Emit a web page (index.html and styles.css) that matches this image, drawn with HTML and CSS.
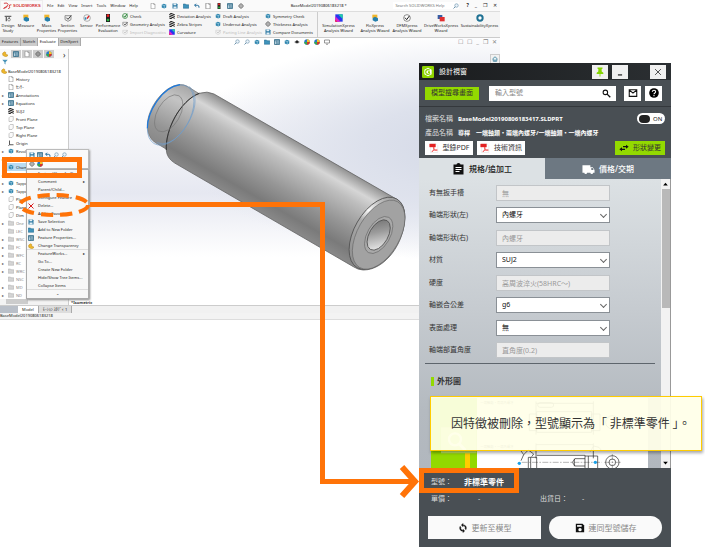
FILE: index.html
```html
<!DOCTYPE html>
<html lang="zh-Hant">
<head>
<meta charset="utf-8">
<title>設計視窗</title>
<link rel="stylesheet" href="styles.css">
</head>
<body>
<svg class="defs" aria-hidden="true">
  <defs>
    <symbol id="i-lens" viewBox="0 0 24 24"><circle cx="14" cy="10" r="7" fill="#eaf3fa" stroke="#6e93ac" stroke-width="2.5"/><path d="M9 15l-7 7" stroke="#6e93ac" stroke-width="4"/></symbol>
    <symbol id="i-doc" viewBox="0 0 24 24"><path d="M4 1h11l5 5v17H4z" fill="#fff" stroke="#777" stroke-width="2"/><path d="M15 1v5h5" fill="none" stroke="#777" stroke-width="2"/></symbol>
    <symbol id="i-plane" viewBox="0 0 24 24"><path d="M4 7l5-5h12v14l-5 6H4z" fill="#fafafa" stroke="#999" stroke-width="2"/></symbol>
    <symbol id="i-folder" viewBox="0 0 24 24"><path d="M1 4h9l2 3h11v14H1z" fill="#d4d4d4" stroke="#aaa" stroke-width="2"/></symbol>
    <symbol id="i-bluefolder" viewBox="0 0 24 24"><path d="M1 4h9l2 3h11v14H1z" fill="#3f93bb" stroke="#1d658a" stroke-width="2"/></symbol>
    <symbol id="i-cube" viewBox="0 0 24 24"><path d="M3 7l8-4 10 3v12l-8 4-10-4z" fill="#2d84ad"/><path d="M3 7l10 3v12M13 10l8-4" fill="none" stroke="#d6edf7" stroke-width="2"/></symbol>
    <symbol id="i-part" viewBox="0 0 24 24"><path d="M3 8l8-5 4 3v8l7 1v5l-8 3L3 17z" fill="#f0b92b" stroke="#b78010" stroke-width="2"/></symbol>
    <symbol id="i-list" viewBox="0 0 24 24"><path d="M2 2h20v20H2z" fill="#d6eaf5" stroke="#27617f" stroke-width="3"/><path d="M2 7h20M9 7v15M12 12h8M12 17h8" stroke="#27617f" stroke-width="3"/></symbol>
    <symbol id="i-ball" viewBox="0 0 24 24"><circle cx="12" cy="12" r="11" fill="#2678ca"/><path d="M12 12V1a11 11 0 0 1 11 11z" fill="#f6c429"/><path d="M12 12h11a11 11 0 0 1-11 11z" fill="#dc3428"/><path d="M12 12v11A11 11 0 0 1 1 12z" fill="#39a74c"/></symbol>
    <symbol id="i-target" viewBox="0 0 24 24"><circle cx="12" cy="12" r="8" fill="none" stroke="#555" stroke-width="2.5"/><path d="M12 0v24M0 12h24" stroke="#555" stroke-width="2"/></symbol>
    <symbol id="i-eye" viewBox="0 0 24 24"><path d="M1 12q11-13 22 0q-11 12-22 0" fill="#777"/><circle cx="12" cy="11" r="5" fill="#222"/></symbol>
    <symbol id="i-check" viewBox="0 0 24 24"><circle cx="12" cy="12" r="10" fill="#eaf5ea" stroke="#3b8c46" stroke-width="3"/><path d="M6 11l5 6 10-14" fill="none" stroke="#227a32" stroke-width="4"/></symbol>
    <symbol id="i-geo" viewBox="0 0 24 24"><path d="M3 5h18v12l-9 5-9-5z" fill="#eee" stroke="#666" stroke-width="2"/><path d="M7 11l5 5L22 4" fill="none" stroke="#444" stroke-width="3"/></symbol>
    <symbol id="i-zebra" viewBox="0 0 24 24"><path d="M1 1h22v22H1z" fill="#fff"/><path d="M1 6l22 8M1 13l22 8M3 0l20 7M1 20l12 4" stroke="#111" stroke-width="4"/></symbol>
    <symbol id="i-curv" viewBox="0 0 24 24"><path d="M1 1h22v22H1z" fill="#2638ee"/><path d="M1 7v16h16z" fill="#e421c9"/><path d="M9 1h14v14z" fill="#22cfa8"/><path d="M1 17v6h6z" fill="#f22"/></symbol>
    <symbol id="i-gauge" viewBox="0 0 24 24"><circle cx="12" cy="12" r="10" fill="#f7f7f7" stroke="#8c8c8c" stroke-width="2"/><path d="M12 14l6-8" stroke="#d22" stroke-width="4"/><path d="M5 10h5v7H5z" fill="#3287b3"/></symbol>
    <symbol id="i-light" viewBox="0 0 24 24"><path d="M6 0h12v24H6z" fill="#222"/><circle cx="12" cy="5" r="4" fill="#e22"/><circle cx="12" cy="18" r="4" fill="#26b33e"/></symbol>
    <symbol id="i-caliper" viewBox="0 0 24 24"><path d="M2 5h20v4H2zM5 9h4v13H5zM14 9h3v6h-3z" fill="#666"/><circle cx="15" cy="17" r="4" fill="none" stroke="#666" stroke-width="2"/></symbol>
    <symbol id="i-mass" viewBox="0 0 24 24"><path d="M4 2h15v10H4z" fill="#f0b52a"/><path d="M12 8l9 5v7l-8 3-8-4v-7z" fill="#267fac"/></symbol>
    <symbol id="i-save" viewBox="0 0 24 24"><path d="M2 2h17l3 3v17H2z" fill="#2d79a2"/><path d="M6 2h11v7H6zM6 14h12v8H6z" fill="#e4eff5"/></symbol>
    <symbol id="i-undo" viewBox="0 0 24 24"><path d="M8 3L2 9l7 6M3 9h10q9 0 7 10" fill="none" stroke="#266f9e" stroke-width="4"/></symbol>
    <symbol id="i-red" viewBox="0 0 24 24"><path d="M2 3h14v12H2z" fill="#375da4"/><path d="M8 9h15v13H8z" fill="#e12f2f"/></symbol>
    <symbol id="i-pdf" viewBox="0 0 24 24"><path d="M4 1h12l5 5v17H4z" fill="#fff" stroke="#d5d5d5"/><path d="M1 2h15v8H1z" fill="#e32222"/><path d="M7 21c4-4 6-8 5-11-2-1-2 3 1 6 2 2 5 3 7 1-1-2-8-1-13 4z" fill="none" stroke="#e33" stroke-width="1.7"/></symbol>
  </defs>
</svg>

<main class="stage">
  <section class="cad">
    <header class="titlebar">
      <div class="brand"><svg class="ds" viewBox="0 0 30 24"><path d="M3 3q13-4 14 4-2 6-15 13 8-2 13-7M28 8q-9-1-7 5 5 6-4 8" fill="none" stroke="#d32f33" stroke-width="3"/></svg><span>SOLIDWORKS</span></div>
      <nav class="menus"><a href="#">File</a><a href="#">Edit</a><a href="#">View</a><a href="#">Insert</a><a href="#">Tools</a><a href="#">Window</a><a href="#">Help</a></nav>
      <div class="quick">
        <svg><use href="#i-doc"/></svg><svg><use href="#i-cube"/></svg><svg><use href="#i-save"/></svg><svg><use href="#i-bluefolder"/></svg><svg><use href="#i-undo"/></svg><svg class="pressed"><use href="#i-doc"/></svg><svg><use href="#i-light"/></svg><svg><use href="#i-list"/></svg><svg><use href="#i-target"/></svg>
      </div>
      <p class="doc">BaseModel20190806183218 *</p>
      <label class="help"><input type="text" aria-label="Search SOLIDWORKS Help" placeholder="Search SOLIDWORKS Help"><svg><use href="#i-lens"/></svg></label>
      <div class="winbtns"><b>?</b><span>_</span><span>❐</span><span>✕</span></div>
    </header>

    <div class="ribbon">
      <button class="tool"><svg><use href="#i-caliper"/></svg>Design<br>Study</button>
      <button class="tool"><svg><use href="#i-mass"/></svg>Measure</button>
      <button class="tool"><svg><use href="#i-mass"/></svg>Mass<br>Properties</button>
      <button class="tool"><svg><use href="#i-geo"/></svg>Section<br>Properties</button>
      <button class="tool"><svg><use href="#i-gauge"/></svg>Sensor</button>
      <button class="tool"><svg><use href="#i-light"/></svg>Performance<br>Evaluation</button>
      <div class="stack">
        <button><svg><use href="#i-check"/></svg>Check</button>
        <button><svg><use href="#i-geo"/></svg>Geometry Analysis</button>
        <button disabled><svg><use href="#i-geo"/></svg>Import Diagnostics</button>
      </div>
      <div class="stack">
        <button><svg><use href="#i-zebra"/></svg>Deviation Analysis</button>
        <button><svg><use href="#i-zebra"/></svg>Zebra Stripes</button>
        <button><svg><use href="#i-curv"/></svg>Curvature</button>
      </div>
      <div class="stack">
        <button><svg><use href="#i-cube"/></svg>Draft Analysis</button>
        <button><svg><use href="#i-cube"/></svg>Undercut Analysis</button>
        <button disabled><svg><use href="#i-geo"/></svg>Parting Line Analysis</button>
      </div>
      <div class="stack">
        <button><svg><use href="#i-cube"/></svg>Symmetry Check</button>
        <button><svg><use href="#i-target"/></svg>Thickness Analysis</button>
        <button><svg><use href="#i-save"/></svg>Compare Documents</button>
      </div>
      <button class="tool first-x"><svg><use href="#i-curv"/></svg>SimulationXpress<br>Analysis Wizard</button>
      <button class="tool"><svg><use href="#i-mass"/></svg>FloXpress<br>Analysis Wizard</button>
      <button class="tool"><svg viewBox="0 0 24 24"><circle cx="12" cy="12" r="10" fill="#fff" stroke="#555" stroke-width="2"/><path d="M6 11l5 6 8-11" fill="none" stroke="#222" stroke-width="3"/></svg>DFMXpress<br>Analysis Wizard</button>
      <button class="tool"><svg><use href="#i-red"/></svg>DriveWorksXpress<br>Wizard</button>
      <button class="tool"><svg viewBox="0 0 24 24"><circle cx="12" cy="12" r="8" fill="#fff" stroke="#1f7193" stroke-width="6"/></svg>SustainabilityXpress</button>
    </div>

    <div class="work">
      <aside class="side">
        <nav class="tabs"><a href="#">Features</a><a href="#">Sketch</a><a href="#" class="on">Evaluate</a><a href="#">DimXpert</a></nav>
        <div class="tree">
          <div class="treetabs"><svg><use href="#i-part"/></svg><svg><use href="#i-list"/></svg><svg><use href="#i-doc"/></svg><svg><use href="#i-target"/></svg><svg><use href="#i-ball"/></svg><span>›</span></div>
          <div class="filter"><svg viewBox="0 0 24 24"><path d="M1 3h22l-9 10v9l-4-3v-6z" fill="#4b95b8"/></svg></div>
          <ul>
            <li class="root"><svg><use href="#i-part"/></svg>BaseModel20190806183218</li>
            <li><svg><use href="#i-doc"/></svg>History</li>
            <li><svg><use href="#i-doc"/></svg>ｾﾝｻｰ</li>
            <li class="more"><svg><use href="#i-list"/></svg>Annotations</li>
            <li class="more"><svg><use href="#i-list"/></svg>Equations</li>
            <li><svg><use href="#i-zebra"/></svg>SUJ2</li>
            <li><svg><use href="#i-plane"/></svg>Front Plane</li>
            <li><svg><use href="#i-plane"/></svg>Top Plane</li>
            <li><svg><use href="#i-plane"/></svg>Right Plane</li>
            <li><svg viewBox="0 0 24 24"><path d="M6 2v17h16M6 19l-4 4" fill="none" stroke="#222" stroke-width="3"/></svg>Origin</li>
            <li class="more"><svg><use href="#i-cube"/></svg>Revolve1</li>
            <li class="more"><svg><use href="#i-cube"/></svg>Chamfer1</li>
            <li class="sel"><svg><use href="#i-cube"/></svg>Chamfer2</li>
            <li class="more"><svg><use href="#i-cube"/></svg>Chamfer3</li>
            <li class="more"><svg><use href="#i-cube"/></svg>Tapped1</li>
            <li class="more"><svg><use href="#i-cube"/></svg>Tapped2</li>
            <li><svg><use href="#i-plane"/></svg>Plane1</li>
            <li><svg><use href="#i-plane"/></svg>Plane2</li>
            <li><svg><use href="#i-plane"/></svg>Dim</li>
            <li class="more dim"><svg><use href="#i-folder"/></svg>One</li>
            <li class="dim"><svg><use href="#i-folder"/></svg>LEC</li>
            <li class="more dim"><svg><use href="#i-folder"/></svg>WSC</li>
            <li class="more dim"><svg><use href="#i-folder"/></svg>FC</li>
            <li class="more dim"><svg><use href="#i-folder"/></svg>WFC</li>
            <li class="more dim"><svg><use href="#i-folder"/></svg>RC</li>
            <li class="more dim"><svg><use href="#i-folder"/></svg>WRC</li>
            <li class="dim"><svg><use href="#i-folder"/></svg>NSC</li>
            <li class="more dim"><svg><use href="#i-folder"/></svg>MD</li>
            <li class="more dim"><svg><use href="#i-folder"/></svg>ND</li>
          </ul>
          <div class="hscroll"><span></span></div>
        </div>
      </aside>

      <div class="view">
        <div class="viewbar">
          <div class="hud"><svg><use href="#i-lens"/></svg><svg><use href="#i-lens"/></svg><svg><use href="#i-cube"/></svg><svg><use href="#i-bluefolder"/></svg><svg><use href="#i-list"/></svg><svg><use href="#i-cube"/></svg><svg><use href="#i-eye"/></svg><svg><use href="#i-ball"/></svg><svg><use href="#i-ball"/></svg><svg viewBox="0 0 24 24"><path d="M2 4h20v12H2zM8 21h8" fill="#fff" stroke="#777" stroke-width="3"/></svg></div>
          <div class="viewwin"><span>☐</span><span>☐</span><span>_</span><span>❐</span><span>✕</span></div>
        </div>
        <div class="dock"><svg viewBox="0 0 24 24"><path d="M2 12L12 3l10 9M5 11v10h14V11" fill="#e6f2f7" stroke="#2f7894" stroke-width="3"/><path d="M10 14h4v7h-4z" fill="#2f7894"/></svg></div>
        <svg class="model" viewBox="0 0 870 645" role="img" aria-label="Shaft model">
          <defs>
            <linearGradient id="g-body" gradientUnits="userSpaceOnUse" x1="500" y1="214" x2="381" y2="423"><stop offset="0" stop-color="#8f8f8f"/><stop offset=".06" stop-color="#a9a9a9"/><stop offset=".17" stop-color="#d6d6d6"/><stop offset=".3" stop-color="#bebebe"/><stop offset=".6" stop-color="#969696"/><stop offset=".85" stop-color="#7a7a7a"/><stop offset="1" stop-color="#898989"/></linearGradient>
            <linearGradient id="g-stub" x1=".7" y1="0" x2=".3" y2="1"><stop offset="0" stop-color="#a5a5a5"/><stop offset=".25" stop-color="#c4c4c4"/><stop offset=".7" stop-color="#959595"/><stop offset="1" stop-color="#858585"/></linearGradient>
            <linearGradient id="g-hole" x1="0" y1="0" x2=".5" y2="1"><stop offset="0" stop-color="#6d6d6d"/><stop offset=".5" stop-color="#9b9b9b"/><stop offset="1" stop-color="#dedede"/></linearGradient>
            <linearGradient id="g-rim" x1="0" y1="0" x2="0" y2="1"><stop offset="0" stop-color="#999"/><stop offset=".15" stop-color="#c2c2c2"/><stop offset=".3" stop-color="#fafafa"/><stop offset=".45" stop-color="#aaa"/><stop offset="1" stop-color="#8d8d8d"/></linearGradient>
          </defs>
          <path d="M52 165C53 115 100 48 148 44q14-1 24 5l45 28L118 243 73 216Q52 200 52 165Z" fill="url(#g-stub)" stroke="#666" stroke-width="2"/>
          <path d="M109 240C105 180 150 92 208 70Q232 62 252 72L790 382C815 395 824 412 824 440 824 520 765 600 700 600Q685 600 670 590L134 279Q110 264 109 240Z" fill="url(#g-body)" stroke="#666" stroke-width="2.5"/>
          <path d="M109 240C105 180 150 92 208 70" fill="none" stroke="#333" stroke-width="3"/>
          <g fill="none" stroke="#6e9ccb" stroke-width="1.8"><ellipse cx="122" cy="135" rx="57" ry="99" transform="rotate(30 122 135)"/><path d="M178 49C212 80 192 145 150 193Q115 231 80 218"/></g>
          <path d="M52 175C52 128 93 52 150 44" fill="none" stroke="#1b78dc" stroke-width="3.5"/>
          <ellipse cx="116" cy="130" rx="34" ry="61" transform="rotate(30 116 130)" fill="none" stroke="#777" stroke-width="1.8"/>
          <ellipse cx="741" cy="490" rx="68" ry="119" transform="rotate(30 741 490)" fill="url(#g-rim)" stroke="#555" stroke-width="2.5"/>
          <ellipse cx="746" cy="494" rx="63" ry="114" transform="rotate(30 746 494)" fill="#a2a2a2" stroke="#666" stroke-width="1.8"/>
          <ellipse cx="746" cy="495" rx="34" ry="61" transform="rotate(30 746 495)" fill="#a9a9a9" stroke="#666" stroke-width="1.8"/>
          <ellipse cx="746" cy="495" rx="28" ry="50" transform="rotate(30 746 495)" fill="url(#g-hole)" stroke="#555" stroke-width="2.5"/>
        </svg>
        <p class="iso">*Isometric</p>
      </div>
    </div>

    <div class="sheets"><i></i><a href="#" class="on">Model</a><a href="#">ﾓｰｼｮﾝ ｽﾀﾃﾞｨ 1</a></div>
    <footer class="status">BaseModel20190806183218</footer>
  </section>

  <div class="context">
    <div class="minibar"><svg><use href="#i-save"/></svg><svg><use href="#i-list"/></svg><svg><use href="#i-undo"/></svg><svg><use href="#i-lens"/></svg><svg><use href="#i-lens"/></svg><svg><use href="#i-target"/></svg><svg><use href="#i-ball"/></svg></div>
    <ul class="menu">
      <li class="head">Feature(Chamfer2)</li>
      <li class="sub">Comment</li>
      <li>Parent/Child...</li>
      <li>Configure Feature</li>
      <li><svg viewBox="0 0 24 24"><path d="M2 2l20 20M22 2L2 22" stroke="#d91c1c" stroke-width="4"/></svg>Delete...</li>
      <li>Add to Favorites</li>
      <li><svg><use href="#i-save"/></svg>Save Selection</li>
      <li><svg><use href="#i-bluefolder"/></svg>Add to New Folder</li>
      <li><svg><use href="#i-list"/></svg>Feature Properties...</li>
      <li class="line"><svg><use href="#i-part"/></svg>Change Transparency</li>
      <li class="sub">FeatureWorks...</li>
      <li>Go To...</li>
      <li>Create New Folder</li>
      <li>Hide/Show Tree Items...</li>
      <li class="line">Collapse Items</li>
      <li class="end">⌄</li>
    </ul>
  </div>

  <section class="panel">
    <header class="p-title">
      <svg class="logo" viewBox="0 0 36 36"><rect width="36" height="36" rx="4" fill="#8fd400"/><path d="M18 5l11 6v14l-11 6-11-6V11z" fill="#fff"/><path d="M23 13a7 7 0 1 0 1 9" fill="none" stroke="#8fd400" stroke-width="4"/><path d="M18 16h6v5h-6z" fill="#8fd400"/></svg>
      <h1>設計視窗</h1>
      <button aria-label="釘選"><svg viewBox="0 0 24 24"><path d="M6 1h12v3l-2 1v6l4 3v3h-7v6h-2v-6H4v-3l4-3V5L6 4z" fill="#84d400"/></svg></button>
      <button aria-label="最小化"><svg viewBox="0 0 24 24"><path d="M7 19h10" stroke="#222" stroke-width="3"/></svg></button>
      <button class="close" aria-label="關閉"><svg viewBox="0 0 24 24"><path d="M5 5l14 14M19 5L5 19" stroke="#333" stroke-width="2"/></svg></button>
    </header>
    <div class="p-search">
      <button class="green">模型搜尋畫面</button>
      <label class="query"><input type="text" aria-label="型號" placeholder="輸入型號"><svg viewBox="0 0 24 24"><circle cx="9" cy="9" r="6" fill="none" stroke="#111" stroke-width="2.8"/><path d="M13 13l9 9" stroke="#111" stroke-width="3.6"/></svg></label>
      <button class="sq" aria-label="郵件"><svg viewBox="0 0 24 24"><path d="M3 4h18v16H3zM3 5l9 7 9-7" fill="none" stroke="#111" stroke-width="2.6"/></svg></button>
      <button class="sq" aria-label="說明"><svg viewBox="0 0 24 24"><circle cx="12" cy="12" r="11.500" fill="#000"/><path d="M8 9c0-5 8-5 8 0 0 3-4 3-4 6M12 17v3" fill="none" stroke="#fff" stroke-width="2.6"/></svg></button>
    </div>
    <div class="p-info">
      <dl>
        <dt>檔案名稱</dt><dd>BaseModel20190806183417.SLDPRT</dd>
        <dt>產品名稱</dt><dd>導桿　一端軸類・兩端內螺牙/一端軸類・一端內螺牙</dd>
      </dl>
      <label class="switch"><input type="checkbox" checked><i></i>ON</label>
      <div class="actions">
        <button><svg><use href="#i-pdf"/></svg>型錄PDF</button>
        <button><svg><use href="#i-pdf"/></svg>技術資訊</button>
        <button class="green"><svg class="wide" viewBox="0 0 30 24"><path d="M1 16l8-6v4h9v4H9v4zM29 8l-8-6v4h-9v4h9v4z" fill="#111"/></svg>形狀變更</button>
      </div>
    </div>
    <nav class="p-tabs">
      <a href="#" class="on"><svg viewBox="0 0 24 24"><path d="M2 3h6a4 3 0 0 1 8 0h6v20H2z" fill="#111"/><path d="M6 9h12M6 13h12M6 17h8" stroke="#fff" stroke-width="2"/></svg>規格/追加工</a>
      <a href="#"><svg viewBox="0 0 28 24"><path d="M1 4h17v4h5l4 6v6h-3a3 3 0 0 1-6 0h-7a3 3 0 0 1-6 0H1z" fill="#fff"/><path d="M20 10h3l2 4h-5z" fill="#6d7882"/></svg>價格/交期</a>
    </nav>
    <div class="p-body">
      <div class="content">
        <form class="fields">
          <label for="f1">有無扳手槽</label><input id="f1" value="無" disabled>
          <label for="f2">軸端形狀(左)</label><span class="pick"><select id="f2"><option>內螺牙</option></select></span>
          <label for="f3">軸端形狀(右)</label><input id="f3" value="內螺牙" disabled>
          <label for="f4">材質</label><span class="pick"><select id="f4"><option>SUJ2</option></select></span>
          <label for="f5">硬度</label><input id="f5" value="高周波淬火(58HRC～)" disabled>
          <label for="f6">軸嵌合公差</label><span class="pick"><select id="f6"><option>g6</option></select></span>
          <label for="f7">表面處理</label><span class="pick"><select id="f7"><option>無</option></select></span>
          <label for="f8">軸端部直角度</label><input id="f8" value="直角度(0.2)" disabled>
        </form>
        <h2>外形圖</h2>
        <svg class="outline" viewBox="48 102 651 210" role="img" aria-label="外形圖">
          <path d="M48 102h651v210H48z" fill="#fff"/>
          <path d="M48 102h138v210H48z" fill="#93d900"/><path d="M150 190h15v122h-15z" fill="#fc0"/>
          <path d="M78 190h107v78H78z" fill="#bfe765"/><circle cx="120" cy="226" r="18" fill="none" stroke="#fff" stroke-width="7"/><path d="M133 240l18 19" stroke="#fff" stroke-width="9"/>
          <g font-family="Noto Sans CJK TC, sans-serif" font-size="10" fill="#333"><text x="196" y="121">一端軸類・兩端內螺牙</text><text x="196" y="252">一端軸類・一端內螺牙</text></g>
          <g fill="none" stroke="#222" stroke-width="2">
            <path d="M363 118h172M363 112v100M535 112v100M343 150h22v50h-22zM365 143h165v62H365zM530 150h25v50h-25zM363 242h172M363 238v45M535 238v45"/>
            <path d="M340 280h25v32M340 280v32M347 280v32M365 274h145v38M510 276h38v36M520 276v36M510 284l-30 0-8 11 8 11h30M478 284v23"/>
            <path d="M320 295h240M568 295h50M592 270v42" stroke-width="1" stroke-dasharray="18 4 5 4"/>
            <path d="M318 290l8-18 14-14 16 12-6 8M326 272l-10-14M526 262l10-16 16 4 8 10"/><circle cx="592" cy="295" r="20"/><circle cx="592" cy="295" r="10"/><circle cx="592" cy="175" r="20"/>
            <rect x="368" y="116" width="48" height="14" rx="7"/>
          </g>
          <circle cx="313" cy="298" r="5" fill="#19a0e8"/><circle cx="541" cy="295" r="5" fill="#19a0e8"/>
        </svg>
      </div>
      <div class="scroll"><svg viewBox="0 0 24 24"><path d="M4 17l8-9 8 9z"/></svg><i></i><svg viewBox="0 0 24 24"><path d="M4 8l8 9 8-9z"/></svg></div>
    </div>
    <footer class="p-foot">
      <div class="facts model-no"><span>型號：</span><strong>非標準零件</strong></div>
      <div class="facts"><span>單價：</span><em>-</em><span>出貨日：</span><em>-</em></div>
      <div class="buttons">
        <button><svg viewBox="0 0 24 24"><path d="M12 1v3a8 8 0 0 1 7 12l-2-2a6 6 0 0 0-5-8v3L8 5zM12 23v-3A8 8 0 0 1 5 8l2 2a6 6 0 0 0 5 8v-3l4 4z" fill="#111" stroke="#111"/></svg>更新至模型</button>
        <button class="round"><svg viewBox="0 0 24 24"><path d="M2 2h16l4 4v16H2z" fill="#111"/><path d="M5 5h11v4H5z" fill="#fff"/><circle cx="12" cy="16" r="4" fill="#fff"/></svg>連同型號儲存</button>
      </div>
    </footer>
  </section>

  <aside class="callout">因特徵被刪除，型號顯示為「 非標準零件 」。</aside>

  <svg class="marks" viewBox="0 0 705 548" aria-hidden="true">
    <g fill="none" stroke="#ff7308" stroke-width="5">
      <path d="M4.500 159.500h75v16h-75zM90 204.500h232.500v277H414"/>
      <ellipse cx="54" cy="205" rx="34" ry="10" stroke-width="4" stroke-dasharray="12 7"/>
      <path d="M421.500 470.500h95v20h-95z"/>
      <path d="M402 467l13 14.500-13 14.500" stroke-width="6"/>
    </g>
  </svg>
</main>
</body>
</html>
```
FILE: styles.css
```css
* { box-sizing: border-box; }
body { margin: 0; background: #fff; font-family: "Noto Sans", "Noto Sans CJK TC", sans-serif; color: #222; }
ul, p, h1, h2, dl, dd { margin: 0; padding: 0; list-style: none; }
a { color: inherit; text-decoration: none; }
button, input, select { font: inherit; color: inherit; border: 0; padding: 0; margin: 0; background: none; border-radius: 0; }
svg { flex: none; }
.defs { position: absolute; width: 0; height: 0; }
.stage { position: relative; min-height: 100vh; overflow: hidden; }

/* CAD window */
.cad { width: calc(100% - 205px); min-width: 500px; font-size: 4px; line-height: 5px; }
.cad svg { width: 6px; height: 6px; }
.titlebar { display: flex; align-items: center; height: 11px; background: #fafafa; }
.brand { display: flex; align-items: center; gap: 1px; width: 43px; height: 11px; padding-left: 2px; border: 1px solid #eee; color: #d32f33; font: bold 4px "Liberation Sans", sans-serif; }
.cad .brand .ds { width: 9px; height: 8px; }
.menus { display: flex; gap: 4px; padding-left: 4px; }
.quick { display: flex; gap: 5px; margin-left: 12px; }
.quick .pressed { background: #d4d4d4; }
.doc { flex: 1; text-align: center; }
.help { display: flex; align-items: center; gap: 1px; width: 66px; background: #fff; margin-right: 7px; }
.help input { flex: 1; min-width: 0; height: 7px; padding-left: 2px; appearance: none; }
.help input::placeholder { color: #777; }
.winbtns { display: flex; gap: 6px; padding-right: 3px; font-size: 5px; }
.ribbon { display: grid; grid-template-columns: 16px 20px 21px 21px 17px 26px 47px 46px 50px 53px 42px 32px 32px 36px 1fr; height: 27px; background: #f5f5f5; border-top: 1px solid #ddd; border-bottom: 1px solid #ccc; white-space: nowrap; }
.tool { display: flex; flex-direction: column; align-items: center; justify-content: flex-start; padding-top: 2px; line-height: 5px; min-width: 0; }
.cad .tool svg { width: 8px; height: 8px; margin-bottom: 1px; }
.first-x { border-left: 1px solid #ccc; }
.stack { display: grid; grid-template-rows: repeat(3, 8px); padding-left: 1px; }
.stack button { display: flex; align-items: center; gap: 2px; }
.stack button:disabled { color: #bbb; }
.stack button:disabled svg { opacity: .3; }
.work { display: flex; height: 267px; }
.side { display: flex; flex-direction: column; width: 69px; }
.tabs { display: flex; height: 8px; width: 81px; position: relative; z-index: 1; }
.tabs a { flex: auto; text-align: center; background: #ccc; border-right: 1px solid #aaa; line-height: 7px; }
.tabs .on { background: #fff; }
.tree { flex: 1; border-right: 1px solid #ccc; margin-top: 3px; background: #fff; overflow: hidden; }
.treetabs { display: flex; align-items: center; gap: 1px; height: 10px; background: #fafafa; }
.cad .treetabs svg { width: 10px; height: 8px; padding: 1px 2px; background: #ccc; }
.cad .treetabs svg:first-child { background: none; }
.treetabs span { margin-left: 8px; font-size: 8px; }
.filter { height: 8px; padding-left: 2px; }
.filter svg { display: block; }
.tree li { position: relative; display: flex; align-items: center; gap: 2px; height: 8px; padding-left: 8px; white-space: nowrap; }
.tree li.root { padding-left: 1px; gap: 1px; }
.more::before { content: "▸"; position: absolute; left: 2px; color: #555; }
.tree .dim { color: #888; }
.tree .sel { background: linear-gradient(90deg, transparent 7px, #b9dbf2 7px); }
.hscroll { height: 6px; background: #f3f3f3; padding-left: 6px; }
.hscroll span { display: block; width: 22px; height: 5px; background: #ccc; }
.view { flex: 1; display: flex; flex-direction: column; background: radial-gradient(ellipse 300px 115px at 96% 41%, #d3d8e6 0, #dde1ec 40%, transparent 100%), linear-gradient(#fff 20%, #f0f1f6 45%, #e6e8f1 58%, #fff 82%); }
.viewbar { display: flex; align-items: center; height: 8px; padding: 0 3px 0 165px; }
.hud { display: flex; gap: 4px; }
.viewwin { display: flex; gap: 4px; margin-left: auto; color: #888; font-size: 6px; }
.dock { align-self: flex-end; display: grid; place-items: center; width: 10px; height: 10px; margin-top: 8px; background: #f2f2f2; border: 1px solid #ccc; }
.cad .model { display: block; width: 290px; height: 215px; margin: 6px 0 0 61px; }
.iso { margin: auto 0 0 2px; font-weight: bold; color: #333; }
.sheets { display: flex; height: 8px; background: #f1f1f1; border-top: 1px solid #ccc; line-height: 7px; }
.sheets i { width: 18px; background: #b9bfc8; }
.sheets a { padding: 0 4px; background: #ddd; border-right: 1px solid #aaa; }
.sheets .on { background: #fff; }
.status { height: 7px; background: #f3f3f3; border-bottom: 1px solid #ddd; }

/* Context menu over the feature tree */
.context { position: absolute; left: 26px; top: 149px; width: 63px; font-size: 4px; line-height: 8px; }
.context svg { width: 6px; height: 6px; }
.minibar { display: flex; flex-wrap: wrap; gap: 2px; height: 20px; padding: 2px 20px 1px 2px; background: #fafafa; border: 1px solid #bbb; box-shadow: 1px 1px 2px #999; }
.menu { background: #f7f7f7; border: 1px solid #aaa; box-shadow: 1px 1px 2px #888; }
.menu li { display: flex; align-items: center; height: 8px; padding-left: 11px; position: relative; white-space: nowrap; }
.menu svg { position: absolute; left: 1px; }
.menu .sub::after { content: "▸"; margin-left: auto; padding-right: 3px; }
.menu .line { border-bottom: 1px solid #ddd; }
.menu .end { justify-content: center; padding: 0; }

/* Design window */
.panel { position: absolute; left: 419px; top: 63px; bottom: 1px; width: 252px; display: flex; flex-direction: column; background: #494f54; font: 7px/10px "Noto Sans", "Noto Sans CJK TC", sans-serif; color: #fff; }
.panel button { display: flex; align-items: center; justify-content: center; gap: 4px; background: #fff; color: #333; }
.panel button svg { width: 10px; height: 10px; }
.panel .green { background: #93d900; }
.p-title { display: flex; align-items: center; gap: 4px; height: 17px; padding: 0 5px 0 3px; background: linear-gradient(90deg, #1a1c1e, #2b2f32); }
.logo { width: 12px; height: 12px; }
.p-title h1 { flex: 1; margin-left: 1px; font-size: 7px; font-weight: 400; }
.p-title button { width: 16px; height: 14px; background: #f0f0f0; }
.p-title .close { margin-left: 18px; }
.p-search { display: flex; align-items: center; height: 27px; padding: 0 9px 0 6px; border-bottom: 1px solid #34383c; gap: 4px; }
.p-search .green { width: 54px; height: 13px; margin-right: 6px; }
.query { flex: 1; display: flex; align-items: center; height: 15px; margin-right: 4px; padding: 0 5px 0 6px; background: #fff; color: #333; }
.query input { flex: 1; min-width: 0; }
.query input::placeholder { color: #888; }
.query svg { width: 9px; height: 9px; }
.p-search .sq { width: 17px; height: 15px; }
.p-info { position: relative; height: 51px; padding: 6px 6px 3px; }
.p-info dl { display: grid; grid-template-columns: 33px 1fr; grid-auto-rows: 14px; line-height: 12px; }
.p-info dd { font-size: 6px; font-weight: 700; white-space: nowrap; }
.p-info dt { color: #ddd; }
.switch { position: absolute; right: 6px; top: 6px; display: flex; align-items: center; gap: 3px; width: 28px; height: 11px; padding-left: 2px; border-radius: 6px; background: #fff; color: #222; font-size: 6px; }
.switch input { position: absolute; opacity: 0; }
.switch i { width: 11px; height: 8px; border-radius: 4px; background: #222; }
.actions { display: flex; gap: 4px; height: 14px; }
.actions button { width: 48px; }
.actions .green { width: 50px; margin-left: auto; }
.p-tabs { display: grid; grid-template-columns: 1fr 1fr; height: 21px; font-size: 8px; font-weight: 500; }
.p-tabs a { display: flex; align-items: center; justify-content: center; gap: 4px; background: #6d7882; }
.p-tabs .on { background: #dce1e4; color: #222; }
.p-tabs svg { width: 13px; height: 12px; }
.p-body { flex: 1; display: flex; min-height: 0; color: #333; background: linear-gradient(#dce1e4, #c6cbd0 45%, #b4bac0 80%, #b1b7be); }
.content { flex: 1; padding: 6px 6px 0; overflow: hidden; }
.fields { display: grid; grid-template-columns: 67px 114px; grid-auto-rows: 16px; align-content: space-between; align-items: center; height: 179px; padding: 0 0 5px 4px; border-bottom: 1px solid #5d656c; }
.fields input, .fields select { width: 100%; height: 16px; padding: 0 5px; border: 1px solid #8a9096; background: #fff; appearance: none; }
.fields input:disabled { background: #ececec; border-color: #c2c5c8; color: #999; }
.pick { position: relative; color: #111; }
.pick select { display: block; }
.pick::after { content: ""; position: absolute; right: 4px; top: 5px; width: 4px; height: 4px; border: solid #666; border-width: 0 1px 1px 0; transform: rotate(45deg); }
.content h2 { display: flex; align-items: center; gap: 3px; margin: 12px 0 12px 6px; font-size: 8px; line-height: 10px; }
.content h2::before { content: ""; width: 3px; height: 9px; background: #93d900; }
.outline { display: block; width: 217px; height: 70px; margin-left: 6px; }
.scroll { display: flex; flex-direction: column; align-items: center; width: 10px; border-right: 1px solid #999; background: #f2f2f2; }
.scroll svg { width: 7px; height: 10px; }
.scroll i { width: 8px; height: 119px; margin-bottom: auto; background: #b9b9b9; }
.p-foot { height: 79px; padding: 5px 9px 9px; color: #ddd; }
.facts { display: grid; grid-template-columns: 47px 62px 42px 1fr; align-items: center; height: 17px; padding-left: 3px; }
.facts em { font-style: normal; }
.facts.model-no { grid-template-columns: 33px 1fr; }
.model-no strong { font-size: 8px; color: #fff; white-space: nowrap; }
.buttons { display: grid; grid-template-columns: 1fr 1fr; gap: 8px; margin-top: 9px; }
.buttons button { height: 23px; font-size: 8px; color: #888; background: #fafafa; }
.panel .round { border-radius: 12px; }

/* Callout and guide lines */
.callout { position: absolute; left: 430px; top: 396px; width: 272px; height: 55px; padding-left: 20px; background: rgba(255, 255, 232, .93); border: 1px solid #fc0; box-shadow: 1px 2px 3px rgba(0, 0, 0, .35); font: 12px/52px "Noto Sans CJK TC", sans-serif; color: #333; white-space: nowrap; }
.marks { position: absolute; left: 0; top: 0; width: 705px; height: 548px; pointer-events: none; }
```
